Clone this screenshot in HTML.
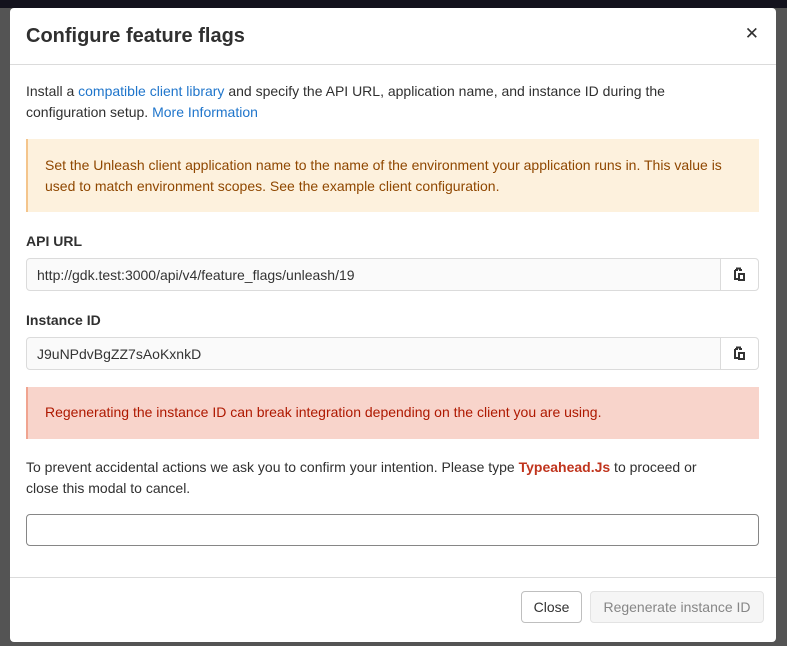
<!DOCTYPE html><html><head><style>
body{margin:0;width:787px;height:646px;background:#545454;font-family:"Liberation Sans",sans-serif;position:relative;overflow:hidden;color:#303030}
.top{position:absolute;left:0;top:0;width:787px;height:8px;background:#13121d}
.m{position:absolute;left:10px;top:8px;width:766px;height:634px;background:#fff;border-radius:4px}
.h{height:56px;border-bottom:1px solid #dbdbdb;position:relative}
.h h1{margin:0;position:absolute;left:16px;top:17px;font-size:20px;font-weight:bold;color:#303030;letter-spacing:0px}
.x{position:absolute;right:17px;top:16px;font-size:17px}
.p{position:absolute;left:16px;font-size:14px;line-height:21px;width:690px}
a{color:#1f75cb;text-decoration:none}
.warn{position:absolute;left:16px;top:131px;width:733px;height:73px;background:#fdf1dd;border-left:2px solid #f4c58c;color:#8f4700;font-size:14px;line-height:21px;box-sizing:border-box;padding:16px 16px 0 17px}
.dang{position:absolute;left:16px;top:379px;width:733px;height:52px;background:#f8d4cb;border-left:2px solid #f0a490;color:#ae1800;font-size:14px;box-sizing:border-box;padding:17px 0 0 17px}
.lbl{position:absolute;left:16px;font-size:14px;font-weight:bold}
.in{position:absolute;left:16px;width:733px;height:33px;box-sizing:border-box;border:1px solid #dbdbdb;border-radius:4px;background:#fafafa;font-size:14px;padding:8px 0 0 10px;color:#333}
.cp{position:absolute;right:0;top:0;width:37px;height:31px;background:#fff;border-left:1px solid #dbdbdb;border-radius:0 4px 4px 0}
.f{position:absolute;left:0;top:569px;width:766px;border-top:1px solid #dbdbdb}
.b{position:absolute;top:583px;height:32px;box-sizing:border-box;border-radius:4px;font-size:14px;padding-top:7px;text-align:center}
</style></head><body>
<div class="top"></div>
<div class="m">
<div class="h"><h1>Configure feature flags</h1><div class="x">✕</div></div>
<div class="p" style="top:73px;width:700px">Install a <a>compatible client library</a> and specify the API URL, application name, and instance ID during the configuration setup. <a>More Information</a></div>
<div class="warn">Set the Unleash client application name to the name of the environment your application runs in. This value is used to match environment scopes. See the example client configuration.</div>
<div class="lbl" style="top:225px">API URL</div>
<div class="in" style="top:250px">http://gdk.test:3000/api/v4/feature_flags/unleash/19<div class="cp"><svg width="37" height="31"><path d="M14 11h2v-1.5h3V11h2M14 11v9h3" fill="none" stroke="#333" stroke-width="2"/><rect x="18" y="15" width="5" height="6" fill="none" stroke="#333" stroke-width="2"/></svg></div></div>
<div class="lbl" style="top:304px">Instance ID</div>
<div class="in" style="top:329px">J9uNPdvBgZZ7sAoKxnkD<div class="cp"><svg width="37" height="31"><path d="M14 11h2v-1.5h3V11h2M14 11v9h3" fill="none" stroke="#333" stroke-width="2"/><rect x="18" y="15" width="5" height="6" fill="none" stroke="#333" stroke-width="2"/></svg></div></div>
<div class="dang">Regenerating the instance ID can break integration depending on the client you are using.</div>
<div class="p" style="top:449px;width:700px">To prevent accidental actions we ask you to confirm your intention. Please type <b style="color:#c0341d">Typeahead.Js</b> to proceed or close this modal to cancel.</div>
<div class="in" style="top:506px;height:32px;background:#fff;border-color:#868686"></div>
<div class="f"></div>
<div class="b" style="left:511px;width:61px;border:1px solid #bfbfbf;color:#333">Close</div>
<div class="b" style="left:580px;width:174px;border:1px solid #e3e3e3;background:#f5f5f5;color:#868686">Regenerate instance ID</div>
</div>
</body></html>
